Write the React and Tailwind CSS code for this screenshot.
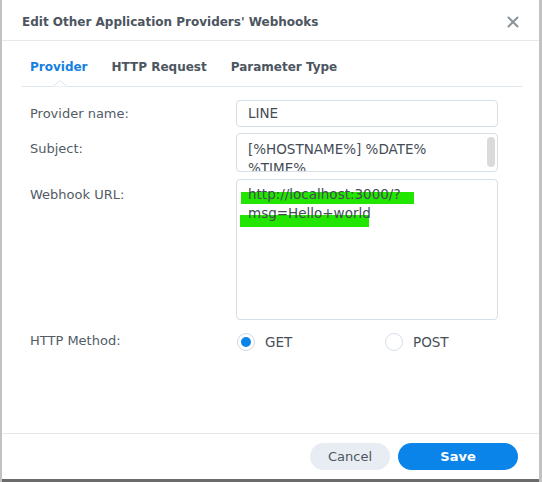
import { useState } from "react";

const labelCls = "text-[13px] text-[#525b66]";

function Radio({ checked, label }) {
  return (
    <div className="flex items-center w-[148px] pl-[1px]">
      <div
        className={
          "w-[18px] h-[18px] rounded-full border flex items-center justify-center bg-white " +
          (checked ? "border-[#cfd9e4]" : "border-[#d6dee7]")
        }
      >
        {checked && <div className="w-[10px] h-[10px] rounded-full bg-[#0b84ea]"></div>}
      </div>
      <span className="ml-[10px] text-[13.5px] text-[#474f59]">{label}</span>
    </div>
  );
}

export default function App() {
  const [method, setMethod] = useState("GET");

  return (
    <div className="w-[542px] h-[482px] bg-[#c2c2c2] pl-[2px] pr-[3px] font-['DejaVu_Sans',sans-serif]">
      <div className="w-[537px] h-[479px] bg-white flex flex-col">

        {/* HEADER */}
        <div className="h-[41px] border-b border-[#e5e9ee] flex items-center justify-between pl-[20px] pr-[20px] pt-[3px]">
          <h1 className="text-[12px] font-bold text-[#4c5560]">
            Edit Other Application Providers' Webhooks
          </h1>
          <svg width="12" height="12" viewBox="0 0 12 12">
            <path d="M1.5 1.5 L10.5 10.5 M10.5 1.5 L1.5 10.5" stroke="#8d939b" strokeWidth="2" strokeLinecap="round" />
          </svg>
        </div>

        {/* TABS */}
        <div className="relative ml-[20px] mr-[17px] h-[46px] border-b border-[#dfe5ec] flex items-end gap-[24px] pl-[8px]">
          <div className="pb-[11px] leading-[16px] text-[12px] font-bold text-[#1580e2]">Provider</div>
          <div className="pb-[11px] leading-[16px] text-[12px] font-bold text-[#4c5560]">HTTP Request</div>
          <div className="pb-[11px] leading-[16px] text-[12px] font-bold text-[#4c5560]">Parameter Type</div>
          <svg className="absolute left-[31px] bottom-[-1px]" width="14" height="7" viewBox="0 0 14 7">
            <path d="M0 6.5 L7 0.5 L14 6.5" fill="white" stroke="#dfe5ec" strokeWidth="1" />
          </svg>
        </div>

        {/* FORM */}
        <div className="pl-[28px] pt-[13px] grid grid-cols-[206px_262px] gap-y-[6px]">

          <div className={labelCls + " h-[27px] flex items-center"}>Provider name:</div>
          <div className="h-[27px] border border-[#d6dee6] rounded-[4px] flex items-center pl-[11px] text-[13.5px] text-[#444c56]">
            LINE
          </div>

          <div className={labelCls + " pt-[6px] leading-[19px]"}>Subject:</div>
          <div className="relative h-[39px] border border-[#d6dee6] rounded-[4px] overflow-hidden pl-[11px] pt-[6px] leading-[19px] text-[13.5px] text-[#444c56]">
            <div>[%HOSTNAME%] %DATE%</div>
            <div>%TIME%</div>
            <div className="absolute left-[250px] top-[3px] w-[8px] h-[30px] rounded-full bg-[#dadada]"></div>
          </div>

          <div className={labelCls + " pt-[6px] leading-[19px] mt-[1px]"}>Webhook URL:</div>
          <div className="relative mt-[1px] h-[141px] border border-[#d6dee6] rounded-[4px] pl-[11px] pt-[5px] leading-[19px] text-[13.5px] text-[#444c56]">
            <div className="absolute left-[4px] top-[12px] w-[173px] h-[12px] bg-[#22e500]"></div>
            <div className="absolute left-[3px] top-[35px] w-[129px] h-[12px] bg-[#22e500]"></div>
            <div className="relative">http://localhost:3000/?</div>
            <div className="relative">msg=Hello+world</div>
          </div>

          <div className={labelCls + " h-[18px] flex items-center mt-[6px]"}>HTTP Method:</div>
          <div className="flex mt-[6px]">
            <div onClick={() => setMethod("GET")}>
              <Radio checked={method === "GET"} label="GET" />
            </div>
            <div onClick={() => setMethod("POST")}>
              <Radio checked={method === "POST"} label="POST" />
            </div>
          </div>

        </div>

        <div className="flex-1"></div>

        {/* FOOTER */}
        <div className="h-[46px] border-t border-[#e5e9ee] flex justify-end items-start pt-[9px] pr-[21px] gap-[8px]">
          <button className="w-[80px] h-[27px] rounded-full bg-[#e8edf3] text-[13px] text-[#4c5560]">
            Cancel
          </button>
          <button className="w-[120px] h-[27px] rounded-full bg-[#0b84ea] text-[13px] font-bold text-white">
            Save
          </button>
        </div>

      </div>
      <div className="h-[3px] bg-[#6b6b6b]"></div>
    </div>
  );
}
